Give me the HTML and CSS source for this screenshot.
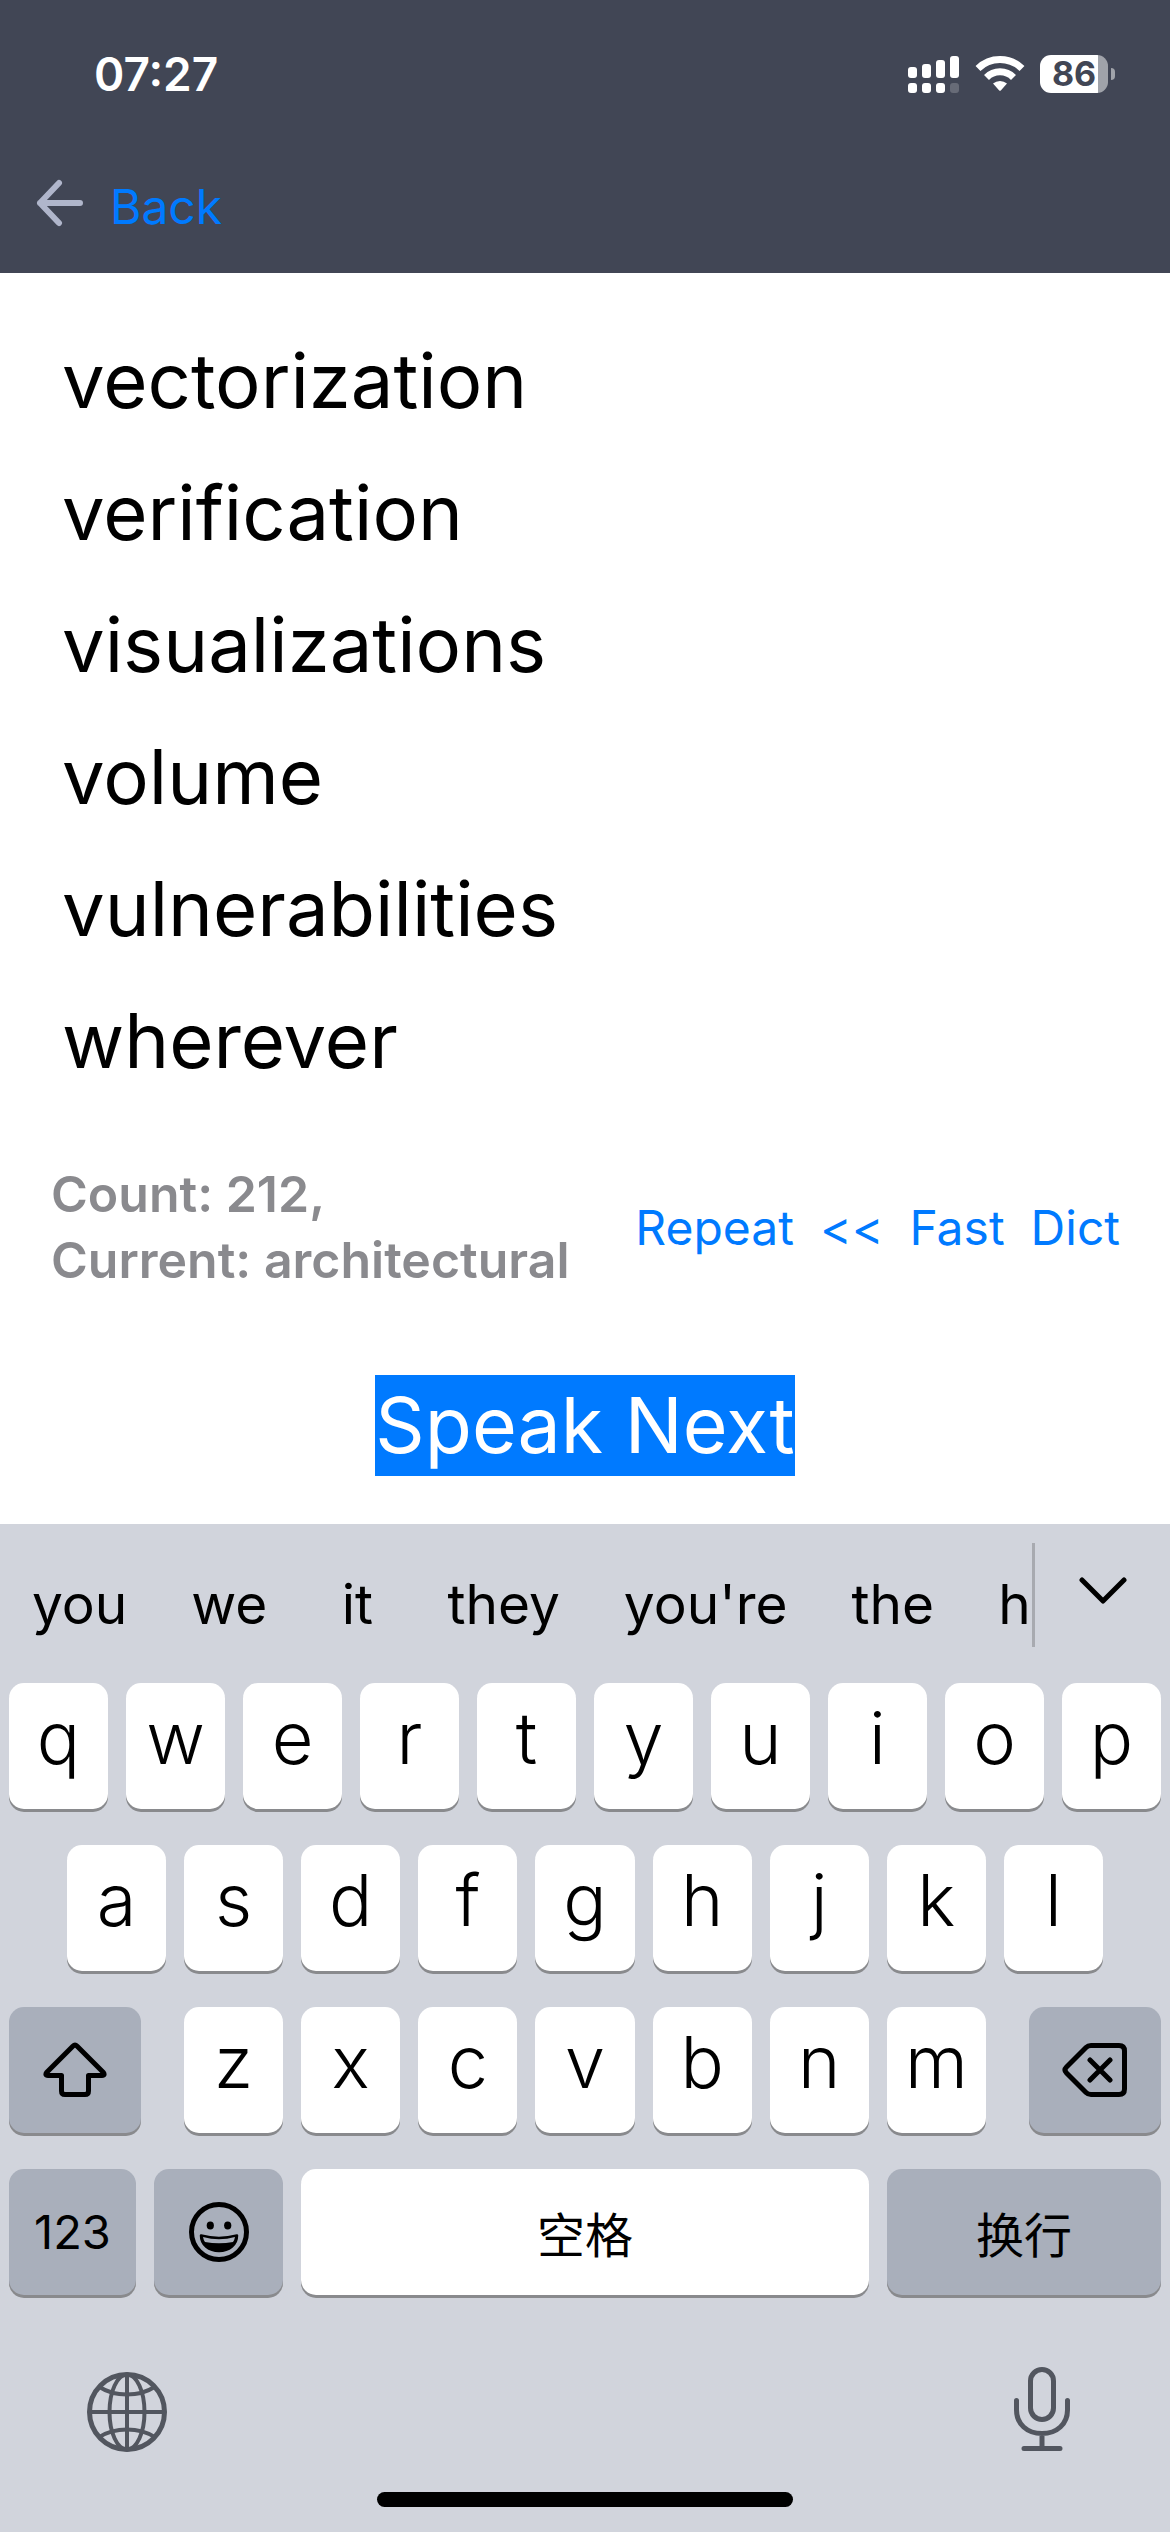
FILE: index.html
```html
<!DOCTYPE html>
<html lang="en">
<head>
<meta charset="utf-8">
<meta name="viewport" content="width=device-width, initial-scale=1">
<title>Word list</title>
<link rel="stylesheet" href="styles.css">
</head>
<body>
<div class="app">
  <header class="header">
    <div class="status">
      <span class="clock">07:27</span>
      <div class="indicators">
        <svg class="signal" viewBox="0 0 52 38" width="52" height="38" aria-hidden="true">
          <g fill="#fff">
            <rect x="0" y="12" width="9" height="11" rx="3"/><rect x="14" y="9" width="9" height="14" rx="3"/>
            <rect x="28" y="5" width="9" height="18" rx="3"/><rect x="42" y="1" width="9" height="22" rx="3"/>
            <rect x="0" y="28" width="9" height="10" rx="3"/><rect x="14" y="28" width="9" height="10" rx="3"/>
            <rect x="28" y="28" width="9" height="10" rx="3"/><rect x="42" y="28" width="9" height="10" rx="3" opacity=".2"/>
          </g>
        </svg>
        <svg class="wifi" viewBox="0 0 50 38" width="50" height="38" aria-hidden="true">
          <g fill="none" stroke="#fff" stroke-width="7">
            <path d="M3 13.500A31.500 31.500 0 0 1 47 13.500"/>
            <path d="M11.500 22.500A19 19 0 0 1 38.500 22.500"/>
          </g>
          <path d="M18 28.600A10.500 10.500 0 0 1 32 28.600L26 35.200Q25 36.400 24 35.200Z" fill="#fff"/>
        </svg>
        <div class="battery"><span class="battery-level">86</span><span class="battery-nub"></span></div>
      </div>
    </div>
    <nav class="nav">
      <a class="back" href="#">
        <svg viewBox="0 0 48 48" width="48" height="48" fill="none" stroke="#b0b6cb" stroke-width="6" stroke-linecap="round" stroke-linejoin="round" aria-hidden="true"><path d="M44 24H4M23 4L4 24L23 44"/></svg>
        <span>Back</span>
      </a>
    </nav>
  </header>

  <main class="main">
    <ul class="words">
      <li>vectorization</li>
      <li>verification</li>
      <li>visualizations</li>
      <li>volume</li>
      <li>vulnerabilities</li>
      <li>wherever</li>
    </ul>
    <div class="toolbar">
      <p class="summary">Count: 212,<br>Current: architectural</p>
      <div class="actions">
        <button type="button">Repeat</button>
        <button type="button">&lt;&lt;</button>
        <button type="button">Fast</button>
        <button type="button">Dict</button>
      </div>
    </div>
    <button class="speak" type="button">Speak Next</button>
  </main>

  <section class="keyboard" aria-label="Keyboard">
    <div class="suggestions">
      <div class="suggestion-list">
        <button type="button">you</button>
        <button type="button">we</button>
        <button type="button">it</button>
        <button type="button">they</button>
        <button type="button">you're</button>
        <button type="button">the</button>
        <button type="button">he</button>
      </div>
      <button class="collapse" type="button" aria-label="More suggestions">
        <svg viewBox="0 0 48 28" width="48" height="28" fill="none" stroke="#000" stroke-width="5" stroke-linecap="round" stroke-linejoin="round"><path d="M3 3L24 24L45 3"/></svg>
      </button>
    </div>
    <div class="keys">
      <div class="row">
        <button class="key">q</button><button class="key">w</button><button class="key">e</button><button class="key">r</button><button class="key">t</button><button class="key">y</button><button class="key">u</button><button class="key">i</button><button class="key">o</button><button class="key">p</button>
      </div>
      <div class="row row-home">
        <button class="key">a</button><button class="key">s</button><button class="key">d</button><button class="key">f</button><button class="key">g</button><button class="key">h</button><button class="key">j</button><button class="key">k</button><button class="key">l</button>
      </div>
      <div class="row row-lower">
        <button class="key special" aria-label="Shift">
          <svg viewBox="0 0 64 56" width="64" height="56" fill="none" stroke="#000" stroke-width="5" stroke-linejoin="round"><path d="M29.800 4.200Q32 2 34.200 4.200L60.200 30.200Q62.500 33.500 59 33.500H45.500V49Q45.500 52.500 42 52.500H22Q18.500 52.500 18.500 49V33.500H5Q1.500 33.500 3.800 30.200Z"/></svg>
        </button>
        <div class="row letters">
          <button class="key">z</button><button class="key">x</button><button class="key">c</button><button class="key">v</button><button class="key">b</button><button class="key">n</button><button class="key">m</button>
        </div>
        <button class="key special" aria-label="Delete">
          <svg viewBox="0 0 66 56" width="66" height="56" fill="none" stroke="#000" stroke-width="5" stroke-linecap="round" stroke-linejoin="round"><path d="M29 3.500H57Q62.500 3.500 62.500 9V47Q62.500 52.500 57 52.500H29Q26 52.500 24 50.500L4.500 31Q1.500 28 4.500 25L24 5.500Q26 3.500 29 3.500ZM28 18L48 38M48 18L28 38"/></svg>
        </button>
      </div>
      <div class="row row-bottom">
        <button class="key special label">123</button>
        <button class="key special" aria-label="Emoji">
          <svg viewBox="0 0 60 60" width="60" height="60" aria-hidden="true"><circle cx="30" cy="30" r="27.500" fill="none" stroke="#000" stroke-width="5"/><ellipse cx="21.300" cy="23.500" rx="3.600" ry="4"/><ellipse cx="38.700" cy="23.500" rx="3.600" ry="4"/><path d="M12 33.500Q30 38.500 48 33.500C48 43 40 49 30 49S12 43 12 33.500Z" fill="#000" stroke="#000" stroke-width="2.500" stroke-linejoin="round"/><path d="M14 35Q30 39.500 46 35Q45.500 38 44 40Q30 42.500 16 40Q14.500 38 14 35Z" fill="#a9afbb"/></svg>
        </button>
        <button class="key label cjk" lang="zh">空格</button>
        <button class="key special label cjk" lang="zh">换行</button>
      </div>
    </div>
    <div class="dock">
      <button type="button" aria-label="Switch keyboard">
        <svg viewBox="0 0 80 80" width="80" height="80" fill="none" stroke="#52565f" stroke-width="4"><circle cx="40" cy="40" r="37.500" stroke-width="5"/><path d="M40 3V77M3 40H77"/><ellipse cx="40" cy="40" rx="17.500" ry="37.500"/><path d="M12.500 15Q24 22.500 40 22.500T67.500 15M12.500 65Q24 57.500 40 57.500T67.500 65"/></svg>
      </button>
      <button type="button" aria-label="Dictate">
        <svg viewBox="0 0 56 86" width="56" height="86" fill="none" stroke="#52565f" stroke-width="5" stroke-linecap="round"><rect x="16.500" y="3.500" width="23" height="50" rx="11.500"/><path d="M2.500 34.500V44C2.500 58 13 67.500 28 67.500S53.500 58 53.500 44V34.500M28 68V82M10 82.500H46"/></svg>
      </button>
    </div>
    <div class="home-bar"></div>
  </section>
</div>
</body>
</html>
```
FILE: styles.css
```css
* { box-sizing: border-box; }

body {
  margin: 0;
  background: #fff;
  color: #000;
  font-family: Inter, "Noto Sans CJK SC", sans-serif;
}

button {
  margin: 0;
  padding: 0;
  border: 0;
  background: none;
  color: inherit;
  font: inherit;
}

svg { display: block; flex: none; }

.app {
  min-height: 100vh;
  display: flex;
  flex-direction: column;
}

/* Header */
.header {
  background: #414655;
  padding-bottom: 36px;
}

.status {
  display: flex;
  justify-content: space-between;
  align-items: center;
  height: 148px;
  padding: 0 55px 0 94px;
}

.clock {
  color: #fff;
  font-size: 46px;
  font-weight: 600;
}

.indicators {
  display: flex;
  align-items: center;
  gap: 15px;
}

.battery {
  display: flex;
  align-items: center;
  gap: 3px;
}

.battery-level {
  width: 68px;
  height: 38px;
  border-radius: 11px;
  background: linear-gradient(90deg, #fff 58px, #a0a3aa 58px);
  color: #414655;
  font-size: 34px;
  font-weight: 700;
  line-height: 38px;
  text-align: center;
}

.battery-nub {
  width: 4px;
  height: 12px;
  border-radius: 0 6px 6px 0;
  background: #a0a3aa;
}

.nav {
  display: flex;
  padding: 14px 36px 0;
}

.back {
  display: flex;
  align-items: flex-start;
  gap: 26px;
  color: #007aff;
  font-size: 48px;
  text-decoration: none;
}

.back svg { margin-top: 17px; }

.back span {
  padding-top: 15px;
  line-height: 60px;
}

/* Word list */
.main {
  flex: 1;
  display: flex;
  flex-direction: column;
}

.words {
  margin: 0;
  padding: 41px 62px 0;
  list-style: none;
  font-size: 76px;
  line-height: 132px;
}

.toolbar {
  display: flex;
  justify-content: space-between;
  align-items: center;
  padding: 55px 50px 0 51px;
}

.summary {
  margin: 0;
  color: #8a8a8e;
  font-size: 50px;
  font-weight: 600;
  line-height: 66px;
}

.actions {
  display: flex;
  gap: 26px;
  color: #007aff;
  font-size: 48px;
}

.speak {
  align-self: center;
  margin: 82px 0 48px;
  background: #007aff;
  color: #fff;
  font-size: 77px;
  line-height: 101px;
}

/* Keyboard */
.keyboard { background: #d1d4dc; }

.suggestions {
  display: flex;
  align-items: flex-start;
  padding-top: 19px;
  height: 159px;
}

.suggestion-list {
  flex: 1;
  min-width: 0;
  display: flex;
  overflow: hidden;
  height: 104px;
  border-right: 3px solid #a8aab0;
  font-size: 55px;
  line-height: 122px;
}

.suggestion-list button {
  flex: none;
  min-width: 116px;
  padding: 0 32px;
}

.collapse {
  width: 135px;
  height: 96px;
  display: flex;
  align-items: center;
  justify-content: center;
}

.keys {
  display: grid;
  gap: 36px;
}

.row {
  display: flex;
  gap: 18px;
  padding: 0 9px;
}

.row-home { padding: 0 67px; }

.row-lower { gap: 43px; }

.letters {
  flex: 802;
  padding: 0;
}

.row-lower > .key { flex: 132; }

.row-bottom {
  display: grid;
  grid-template-columns: 127fr 129fr 568fr 274fr;
}

.key {
  flex: 1 1 0;
  min-width: 0;
  height: 126px;
  padding-bottom: 16px;
  border-radius: 15px;
  background: #fff;
  box-shadow: 0 3px 0 #898a8d;
  font-size: 72px;
  font-weight: 300;
  line-height: 110px;
}

.special {
  display: flex;
  align-items: center;
  justify-content: center;
  padding: 0;
  background: #a9afbb;
}

.label {
  padding: 0;
  font-size: 47px;
  font-weight: 400;
  line-height: 126px;
}

.cjk {
  padding-top: 8px;
  font-size: 48px;
  line-height: 118px;
}

.dock {
  display: flex;
  justify-content: space-between;
  align-items: flex-end;
  padding: 71px 100px 0 87px;
}

.home-bar {
  width: 416px;
  height: 15px;
  margin: 40px auto 25px;
  border-radius: 8px;
  background: #000;
}
```
